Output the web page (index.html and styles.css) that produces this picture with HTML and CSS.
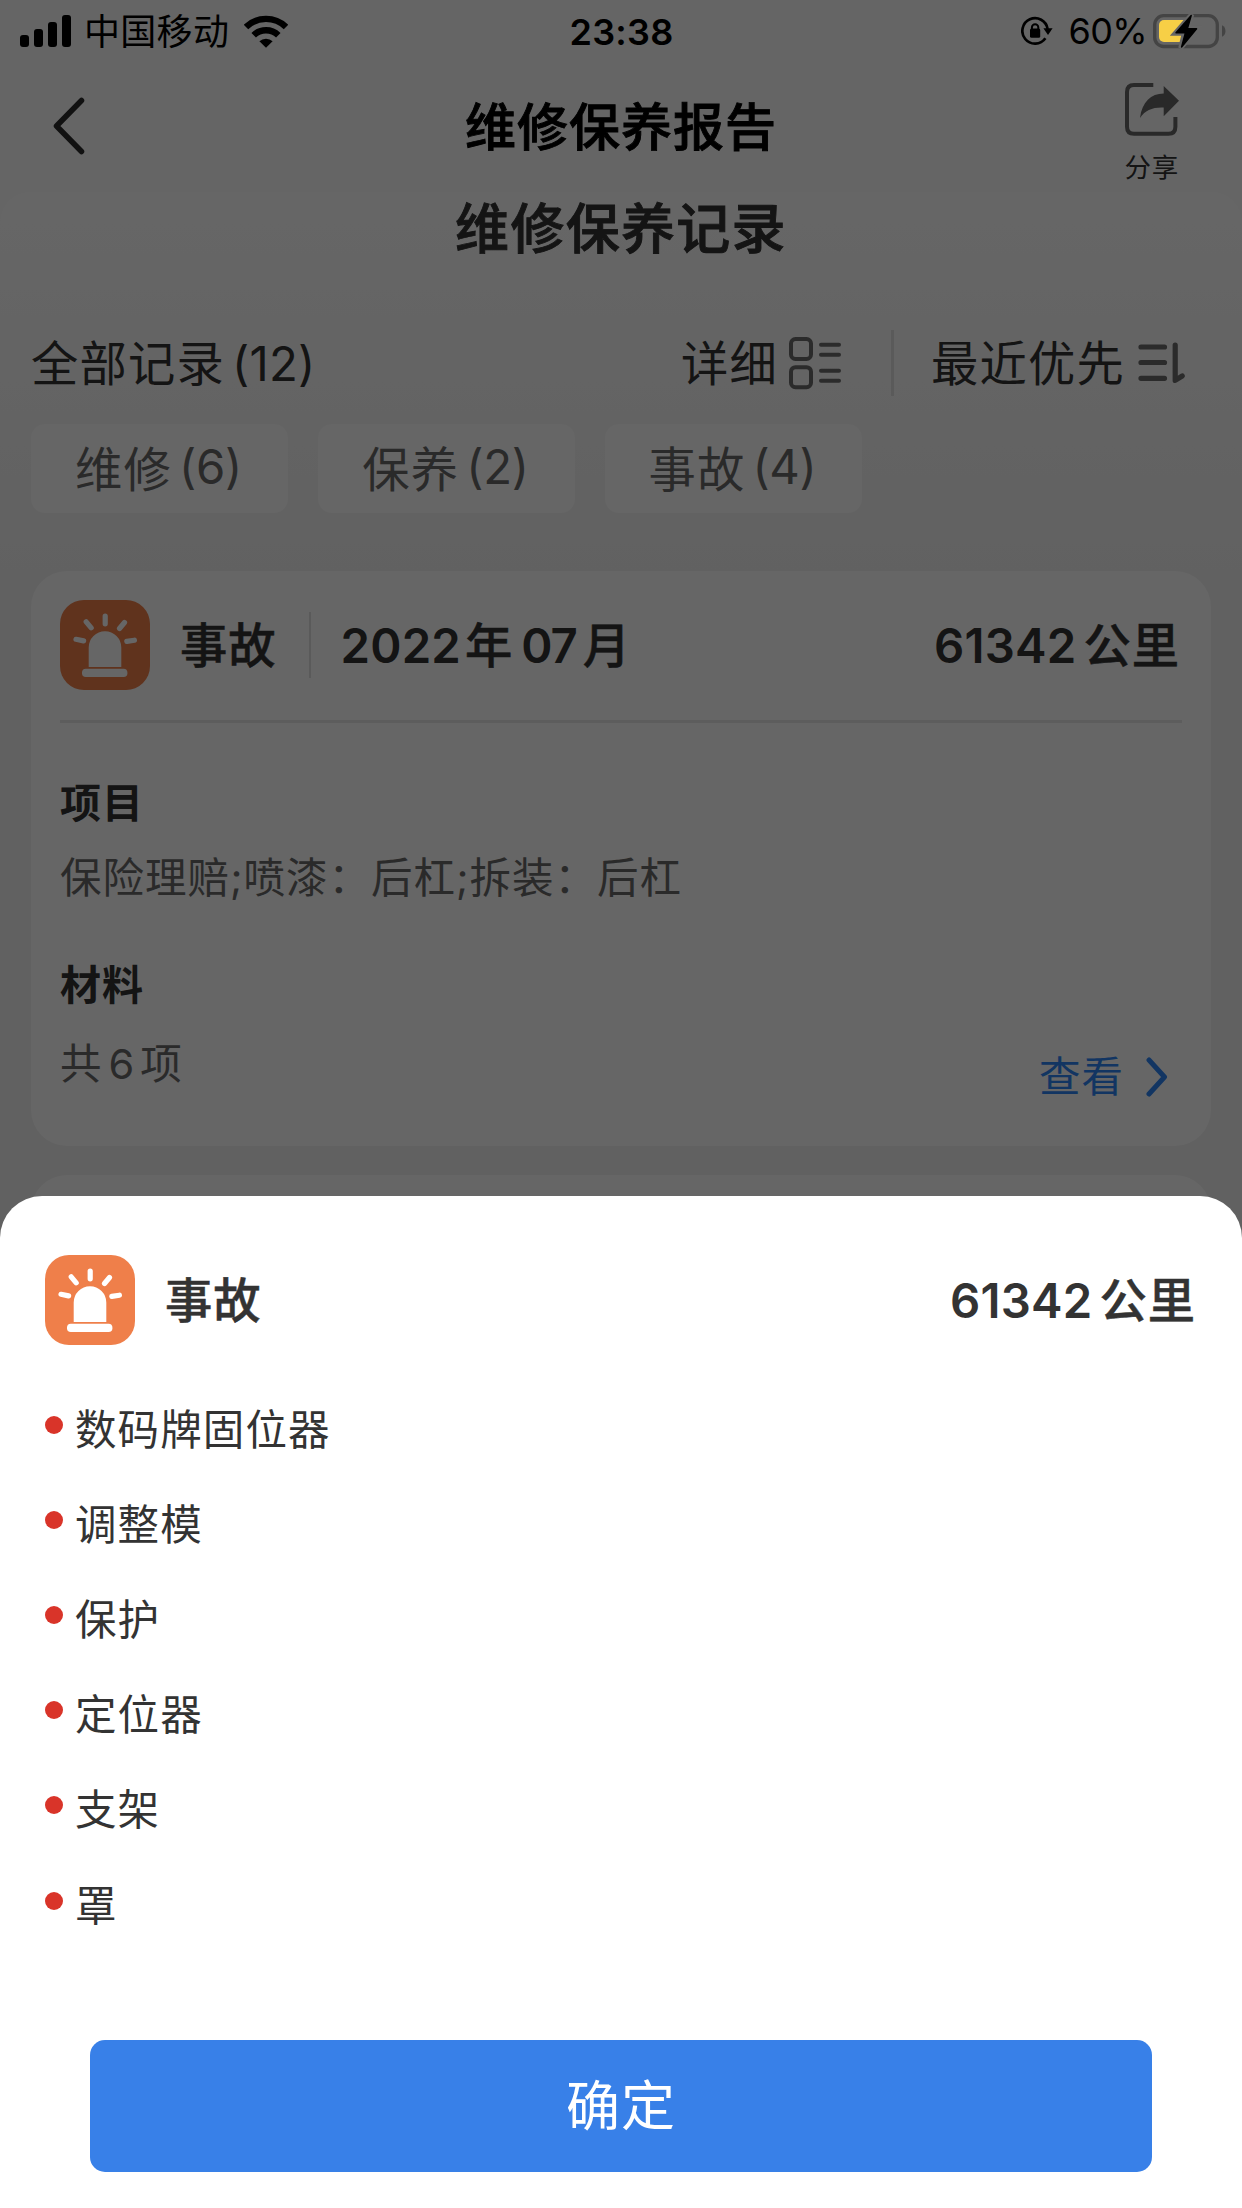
FILE: index.html
```html
<!DOCTYPE html>
<html lang="zh-CN">
<head>
<meta charset="utf-8">
<title>维修保养报告</title>
<link rel="stylesheet" href="styles.css">
</head>
<body>
<svg width="0" height="0" class="defs">
  <symbol id="siren" viewBox="0 0 90 90">
    <rect width="90" height="90" rx="24" fill="#ef7f4a"/>
    <path d="M28.7 67V47.6a16.3 16.3 0 0 1 32.6 0V67Z" fill="#fff"/>
    <rect x="22" y="68.7" width="45.4" height="8.3" rx="3.8" fill="#fff"/>
    <path d="M45.2 16v7.8M26.2 21.8l5 6M64.5 22.5l-5 6M16 39.3l7.6 1.6M74.4 40.2l-7.6 1.2" stroke="#fff" stroke-width="5.2" stroke-linecap="round"/>
  </symbol>
</svg>
<div class="screen">
  <header class="status">
    <div class="status-left">
      <svg width="51" height="32" viewBox="0 0 51 32"><rect y="20" width="9" height="12" rx="3"/><rect x="14" y="14" width="9" height="18" rx="3"/><rect x="28" y="7" width="9" height="25" rx="3"/><rect x="42" width="9" height="32" rx="3"/></svg>
      <span class="carrier">中国移动</span>
      <svg width="44" height="33" viewBox="0 0 44 33"><path d="M2 12A28.8 28.8 0 0 1 42 12M9.7 20.2a17.6 17.6 0 0 1 24.6 0" fill="none" stroke="#000" stroke-width="6.4"/><path d="M22 32.7l-6.6-6.4a9.6 9.6 0 0 1 13.2 0Z"/></svg>
    </div>
    <span class="clock">23:38</span>
    <div class="status-right">
      <svg width="32" height="30" viewBox="0 0 32 30"><path d="M26.6 13A12.7 12.7 0 1 0 24.4 22.3" fill="none" stroke="#000" stroke-width="2.7"/><path d="M22.4 12.3h9.2l-4.6 6.6Z"/><rect x="9" y="12.6" width="10.2" height="9.2" rx="1.5"/><path d="M10.9 13v-1.6a3.2 3.2 0 0 1 6.4 0V13" fill="none" stroke="#000" stroke-width="2"/></svg>
      <span class="percent">60%</span>
      <svg width="74" height="35" viewBox="0 0 74 35"><rect x="1.7" y="1.7" width="62.6" height="30.8" rx="9" fill="none" stroke="#444" stroke-width="3.3"/><rect x="6" y="6" width="29" height="22" rx="5" fill="#f7cf46"/><path d="M69 11.3a6.5 6.5 0 0 1 0 11.5Z" fill="#444"/><path d="M38.7 .5L22.3 19.3h9L27.7 34l16.6-19.8h-9Z" stroke="#666" stroke-width="5"/><path d="M38.2 1.5L23 18.7h9.4L28.6 33l15-18.2h-9.2Z" stroke="#000" stroke-width="1.4" stroke-linejoin="round"/></svg>
    </div>
  </header>

  <nav class="nav">
    <svg class="back" width="34" height="60" viewBox="0 0 34 60"><path d="M30.500 4.500L5.500 30 30.500 55.500" fill="none" stroke="#2b2b2b" stroke-width="5.500" stroke-linecap="round" stroke-linejoin="round"/></svg>
    <h1 class="nav-title">维修保养报告</h1>
    <div class="share">
      <svg width="55" height="53" viewBox="0 0 55 53"><path d="M28.300 2H9Q2 2 2 9V43.700Q2 50.700 9 50.700H43.500Q50.400 50.700 50.400 43.700V34" fill="none" stroke="#666" stroke-width="4"/><path d="M15 35C17 19 26 10.500 38.700 10.500V3L54 17.700 38.700 33.300V24.500C28 24 20 27 15 35Z" fill="#666"/></svg>
      <span>分享</span>
    </div>
  </nav>

  <main class="content">
    <h2 class="heading">维修保养记录</h2>
    <div class="filter">
      <span class="all">全部记录<span class="num paren">(12)</span></span>
      <div class="tools">
        <span>详细</span>
        <svg width="53" height="53" viewBox="0 0 53 53" fill="none" stroke="#6b6b6b" stroke-width="4"><rect x="2" y="2" width="20" height="20" rx="4.500"/><rect x="2" y="30.200" width="20" height="20" rx="4.500"/><path d="M32 7.800h18M32 17.800h18M32 33.800h18M32 43.800h18" stroke-linecap="round"/></svg>
        <i class="bar"></i>
        <span>最近优先</span>
        <svg width="48" height="42" viewBox="0 0 48 42" fill="none" stroke="#6b6b6b" stroke-width="5.200" stroke-linecap="round" stroke-linejoin="round"><path d="M3 5h23.500M3 20.500h23.500M3 36.300h23.500M37.200 3v35.400l7-4.400"/></svg>
      </div>
    </div>
    <div class="pills">
      <span class="pill">维修<span class="num paren">(6)</span></span>
      <span class="pill">保养<span class="num paren">(2)</span></span>
      <span class="pill">事故<span class="num paren">(4)</span></span>
    </div>
    <article class="card">
      <div class="card-head">
        <svg width="90" height="90"><use href="#siren"/></svg>
        <span class="kind">事故</span>
        <i class="bar thin"></i>
        <span class="date"><span class="num year">2022</span>年<span class="num month">07</span>月</span>
        <span class="km"><span class="num">61342</span>公里</span>
      </div>
      <h3>项目</h3>
      <p>保险理赔;喷漆：后杠;拆装：后杠</p>
      <h3 class="second">材料</h3>
      <div class="card-foot">
        <p>共<span class="six">6</span>项</p>
        <a class="view">查看<svg width="22" height="40" viewBox="0 0 22 40"><path d="M3 3l15.500 17L3 37" fill="none" stroke="#2f86f5" stroke-width="5" stroke-linecap="round" stroke-linejoin="round"/></svg></a>
      </div>
    </article>
    <article class="card next"></article>
  </main>

  <div class="mask"></div>

  <section class="sheet">
    <div class="sheet-head">
      <svg width="90" height="90"><use href="#siren"/></svg>
      <span class="kind">事故</span>
      <span class="km"><span class="num">61342</span>公里</span>
    </div>
    <ul class="parts">
      <li>数码牌固位器</li>
      <li>调整模</li>
      <li>保护</li>
      <li>定位器</li>
      <li>支架</li>
      <li>罩</li>
    </ul>
    <button class="confirm">确定</button>
  </section>
</div>
</body>
</html>
```
FILE: styles.css
```css
* { box-sizing: border-box; margin: 0; padding: 0; }
body { font-family: Inter, "Noto Sans CJK SC", sans-serif; color: #333; }
svg { display: block; flex: none; }
.defs { position: absolute; }
.screen { position: relative; width: 1242px; height: 2208px; overflow: hidden; background: #fcfcfc; display: flex; flex-direction: column; }

.status { position: relative; z-index: 2; height: 60px; display: grid; grid-template-columns: 1fr auto 1fr; align-items: center; padding: 0 15px 0 20px; color: #000; font-size: 36px; line-height: 60px; }
.status-left, .status-right { display: flex; align-items: center; }
.status-right { justify-content: flex-end; }
.carrier { font-size: 36px; letter-spacing: .3px; margin: 2px 15px 0 13px; }
.clock { font-weight: 600; letter-spacing: .2px; padding-top: 1px; margin-right: 4px; }
.percent { margin: 0 6px 0 15px; letter-spacing: -.6px; }

.nav { height: 132px; display: grid; grid-template-columns: 1fr auto 1fr; align-items: center; padding: 0 62px 0 51px; }
.nav-title { font-size: 51px; font-weight: 500; -webkit-text-stroke: .9px; letter-spacing: 1px; color: #000; line-height: 60px; padding-top: 3px; margin-left: 11px; }
.share { justify-self: end; display: flex; flex-direction: column; align-items: center; gap: 15px; font-size: 26.500px; letter-spacing: .8px; line-height: 34px; padding-top: 14px; }
.share span { margin: -1px 1px 0 0; }

.content { flex: 1; border-radius: 30px 30px 0 0; background: linear-gradient(#fff, #f3f3f3 380px, #f1f1f1); padding: 0 31px; }
.heading { text-align: center; font-size: 54px; font-weight: 500; -webkit-text-stroke: .9px; letter-spacing: 1.3px; line-height: 72px; padding-top: 2px; }
.filter { margin-top: 64px; height: 66px; display: flex; justify-content: space-between; align-items: center; font-size: 47.300px; letter-spacing: 1.2px; line-height: 64px; padding-right: 25px; }
.filter span { padding-top: 2px; }
.tools { display: flex; align-items: center; }
.tools svg:nth-of-type(1) { margin: 0 49px 0 11px; }
.tools svg:nth-of-type(2) { margin-left: 13px; }
.bar { width: 3px; height: 66px; background: #e0e0e0; margin-right: 37px; }
.num { letter-spacing: .2px; }
.paren { margin-left: 7px; }
.pills { margin-top: 28px; display: flex; gap: 30px; }
.pill { width: 257px; height: 89px; padding: 0 2px 4px 0; border-radius: 14px; background: #fefefe; color: #6a6a6a; display: flex; justify-content: center; align-items: center; font-size: 47.300px; letter-spacing: 1.2px; }
.pill .paren { letter-spacing: -.3px; }
.card { margin-top: 58px; height: 575px; border-radius: 36px; background: #fff; padding: 29px; }
.card-head { height: 123px; display: flex; align-items: flex-start; border-bottom: 3px solid #e8e8e8; font-size: 47.300px; font-weight: 500; line-height: 92px; letter-spacing: 1px; }
.card-head .num, .sheet-head .num { font-weight: 600; -webkit-text-stroke: 0; }
.kind, .date, .km { -webkit-text-stroke: .5px; }
.kind { margin-left: 30px; }
.thin { width: 2px; margin: 12px 30px 0 32px; }
.year { margin-right: 4px; }
.date .month { margin: 0 6px 0 8px; letter-spacing: -1px; }
.km { margin-left: auto; }
.card-head .km { margin-right: 2px; }
.sheet-head .km { margin-right: 1px; }
.km .num { margin-right: 7px; }
.card h3 { margin-top: 53px; font-size: 41px; font-weight: 700; letter-spacing: 1px; line-height: 54px; }
.card h3.second { margin-top: 53px; }
.card p { margin-top: 21px; font-size: 41.500px; letter-spacing: 1px; line-height: 54px; color: #6a6a6a; }
.card-foot { display: flex; justify-content: space-between; align-items: flex-start; }
.card-foot p { margin-top: 25px; }
.six { margin: 0 5px 0 6px; }
.view { display: flex; align-items: center; gap: 22px; margin: 38px 14px 0 0; font-size: 41.500px; letter-spacing: 1px; line-height: 54px; color: #2f86f5; }
.view svg { margin-top: -1px; }
.card.next { margin-top: 29px; }

.mask { position: absolute; inset: 0; z-index: 1; background: rgba(0, 0, 0, .6); }

.sheet { position: absolute; z-index: 3; left: 0; right: 0; bottom: 0; height: 1012px; background: #fff; border-radius: 42px 42px 0 0; padding: 59px 45px 36px; display: flex; flex-direction: column; }
.sheet-head { height: 90px; display: flex; align-items: flex-start; font-size: 47.300px; font-weight: 500; letter-spacing: 1px; line-height: 92px; }
.parts { list-style: none; margin-top: 37px; }
.parts li { height: 95.100px; display: flex; align-items: center; font-size: 41.500px; letter-spacing: 1.1px; padding-bottom: 5px; }
.parts li::before { content: ""; width: 18px; height: 18px; margin: 0 12px 4px 0; border-radius: 50%; background: #d93429; }
.confirm { margin: auto 45px 0; height: 132px; padding-top: 2px; border: 0; border-radius: 15px; background: #3880e8; color: #fff; font: 54px/130px Inter, "Noto Sans CJK SC", sans-serif; letter-spacing: 1px; }
```
